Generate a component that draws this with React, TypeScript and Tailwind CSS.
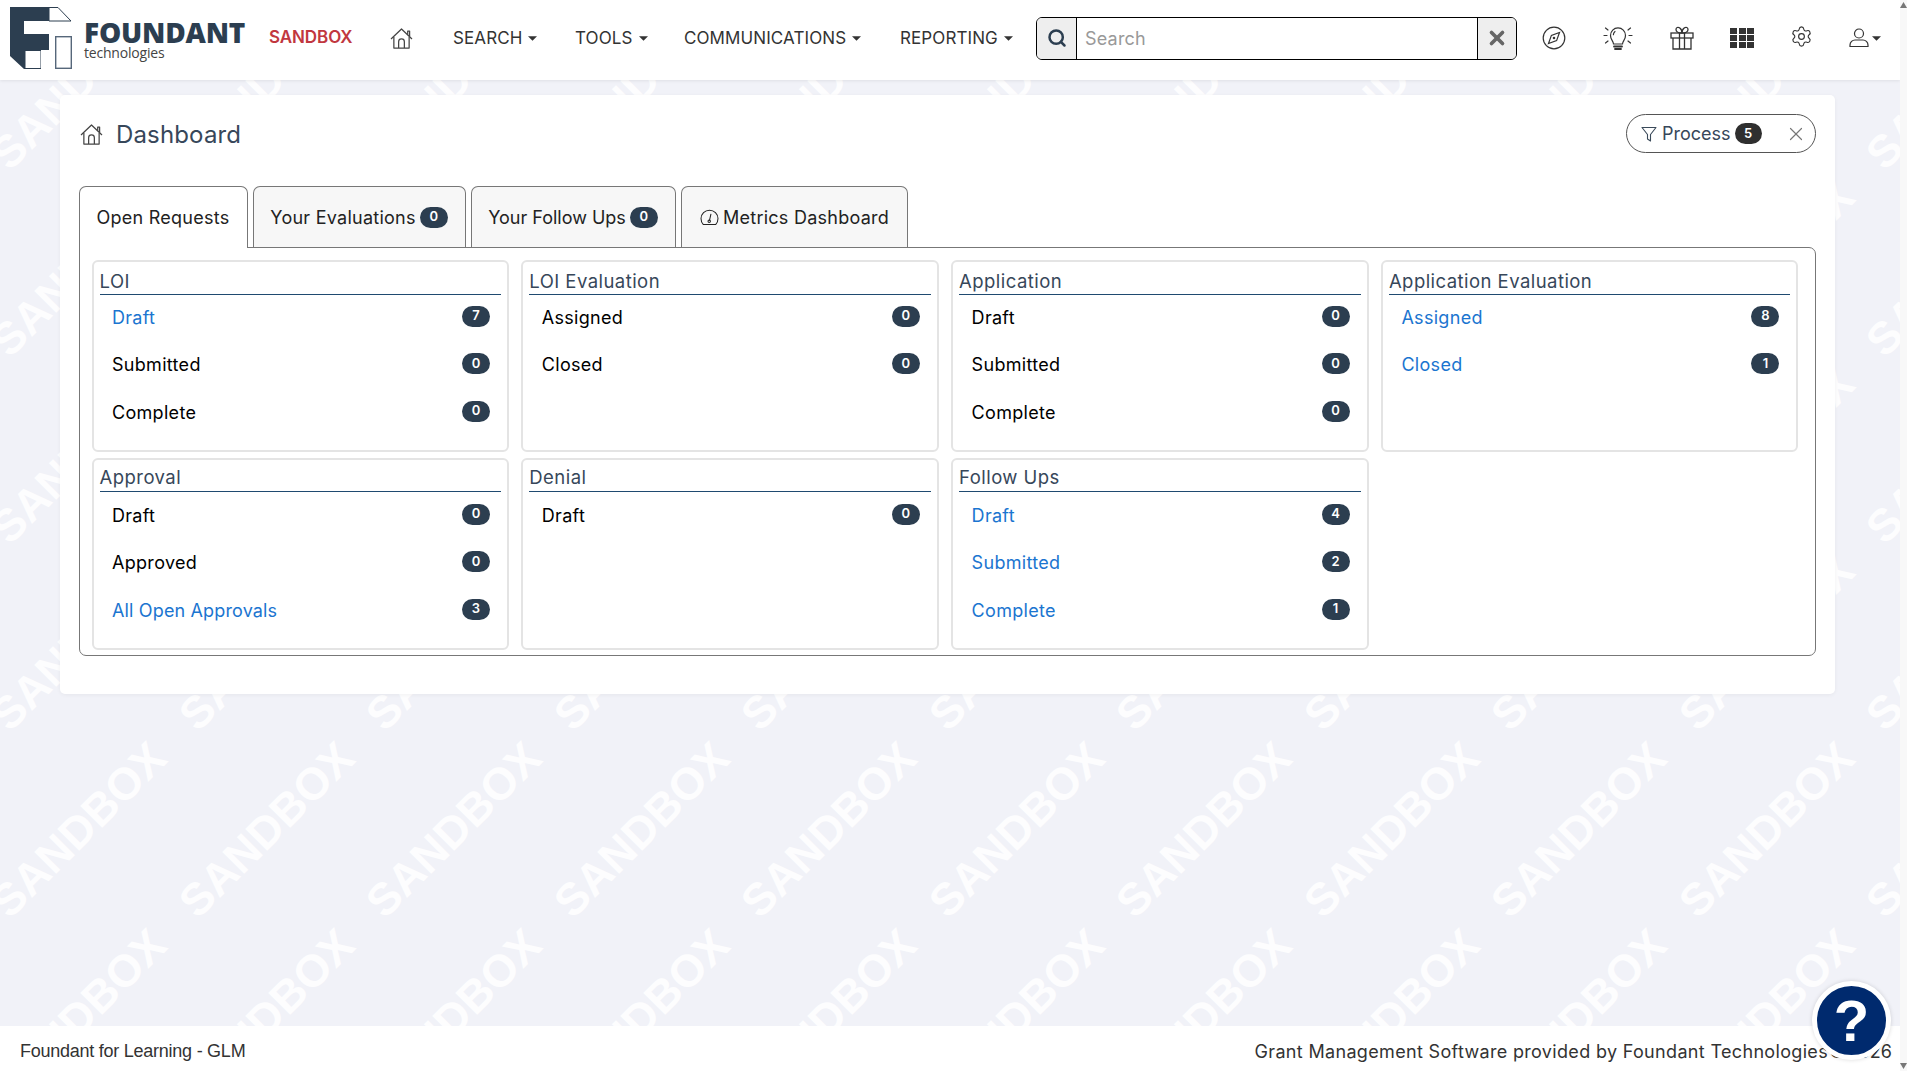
import { Search, X, Settings } from "lucide-react"

const sans = "font-['Inter','Liberation_Sans',sans-serif]"

function Caret({ className = "" }: { className?: string }) {
  return (
    <svg viewBox="0 0 10 5" className={`w-[9px] h-[5px] ${className}`}>
      <path d="M0 0h10L5 5z" fill="#333" />
    </svg>
  )
}

function Logo() {
  return (
    <svg viewBox="0 0 73 72" className="w-[73px] h-[72px] shrink-0 mt-[-4px]">
      <path d="M10 7H49V21H24V34H49V50H41V69H24L10 56Z" fill="#2c3e50" />
      <rect x="25.5" y="51" width="15" height="17" fill="#fff" />
      <path d="M49 7.5H58L71 21H49Z" fill="#fff" stroke="#2c3e50" />
      <rect x="55.7" y="36.7" width="15.6" height="31.6" fill="#fff" stroke="#56677a" strokeWidth="1.4" />
    </svg>
  )
}

function HomeIcon({ className = "" }: { className?: string }) {
  return (
    <svg viewBox="0 0 24 22" fill="none" stroke="#444" strokeWidth="1.3" strokeLinejoin="round" className={className}>
      <path d="M1 11.5 12 1l11 10.5" />
      <path d="M18.5 7V3.2h2V9" />
      <path d="M4 9.5V21h16V9.5" />
      <path d="M9 21v-6.5a3 3 0 0 1 6 0V21" />
    </svg>
  )
}

function CompassIcon() {
  return (
    <svg viewBox="0 0 24 24" fill="none" stroke="#333" strokeWidth="1.2" className="w-[24px] h-[24px]">
      <circle cx="12" cy="12" r="10.8" />
      <path d="M17.5 6.5 14.6 14.6 6.5 17.5 9.4 9.4Z" />
      <circle cx="12" cy="12" r="0.7" fill="#333" />
    </svg>
  )
}

function BulbIcon() {
  return (
    <svg viewBox="0 0 30 26" fill="none" stroke="#333" strokeWidth="1.2" strokeLinecap="round" className="w-[30px] h-[26px]">
      <path d="M10.5 19c0-3-3-4.2-3-8.6a7.5 7.5 0 0 1 15 0c0 4.400-3 5.600-3 8.600Z" />
      <path d="M11 21.500h8M12 24h6" strokeWidth="1.800" />
      <path d="M12 6.500c-1 .8-1.600 2-1.600 3.200" />
      <path d="M1 10.500h3M26 10.500h3M2.500 3l2.500 2M27.500 3 25 5M2.500 18l2.500-2M27.500 18 25 16" />
    </svg>
  )
}

function GiftIcon() {
  return (
    <svg viewBox="0 0 24 24" fill="none" stroke="#333" strokeWidth="1.3" className="w-[24px] h-[24px]">
      <rect x="1" y="7" width="22" height="5" />
      <path d="M3 12v11h18V12" />
      <path d="M9.500 7v16M14.500 7v16" />
      <path d="M12 7C9 7 6 6 6 3.500 6 1.500 8 .8 9.500 1.800 11 2.800 12 5 12 7c0-2 1-4.200 2.500-5.200C16 .8 18 1.500 18 3.500 18 6 15 7 12 7Z" />
    </svg>
  )
}

function AppsIcon() {
  return (
    <div className="grid grid-cols-3 gap-[1.5px] w-[24px] h-[20px]">
      {Array.from({ length: 9 }).map((_, i) => (
        <div key={i} className="bg-[#333]" />
      ))}
    </div>
  )
}

function UserIcon() {
  return (
    <svg viewBox="0 0 20 20" fill="none" stroke="#333" strokeWidth="1.2" className="w-[20px] h-[20px]">
      <circle cx="10" cy="5.500" r="4.500" />
      <path d="M1 18.500v-1.500c0-3 2.500-5 5-5h8c2.500 0 5 2 5 5v1.500Z" />
    </svg>
  )
}

function FunnelIcon() {
  return (
    <svg viewBox="0 0 16 16" fill="none" stroke="#3a4a5a" strokeWidth="1.100" strokeLinejoin="round" className="w-[16px] h-[16px]">
      <path d="M1 1.500h14L9.500 8.500v6.500l-3-2V8.500Z" />
    </svg>
  )
}

function GaugeIcon() {
  return (
    <svg viewBox="0 0 20 18" fill="none" stroke="#222" strokeWidth="1.100" strokeLinecap="round" className="w-[19px] h-[17px]">
      <path d="M3.500 16.500a9 9 0 1 1 13 0Z" />
      <path d="M11.500 5.500 10 12" />
      <circle cx="9.700" cy="13" r="1.300" />
    </svg>
  )
}

function NavItem({ label, className }: { label: string; className: string }) {
  return (
    <div className={`flex items-center gap-[6px] mt-[1px] text-[17px] text-[#333] tracking-[0.1px] ${className}`}>
      <span>{label}</span>
      <Caret />
    </div>
  )
}

function Badge({ n }: { n: number }) {
  return (
    <span className="flex items-center justify-center w-[28px] h-[21px] rounded-full bg-[#2c3e50] text-white text-[13px] font-semibold tracking-normal">
      {n}
    </span>
  )
}

type Row = { label: string; count: number; link?: boolean }

function Panel({ title, rows, tall }: { title: string; rows: Row[]; tall?: boolean }) {
  return (
    <div className="h-[192px] border-2 border-[#e4e4e4] rounded-[6px] px-[6px]">
      <div className={`border-b-[1.5px] border-[#1f4a70] text-[18.5px] leading-[26px] tracking-[0.45px] text-[#37475a] ${tall ? "h-[32px] pt-[4.500px]" : "h-[33px] pt-[6px]"}`}>
        {title}
      </div>
      <div className={`pl-[12.500px] pr-[11px] ${tall ? "pt-[12px]" : "pt-[11px]"}`}>
        {rows.map((r) => (
          <div key={r.label} className="flex items-start justify-between h-[47.500px]">
            <span className={`text-[18px] leading-[24px] ${r.label.length > 12 ? "tracking-[0.15px]" : "tracking-[0.3px]"} ${r.link ? "text-[#1b75d0]" : "text-black"}`}>
              {r.label}
            </span>
            <Badge n={r.count} />
          </div>
        ))}
      </div>
    </div>
  )
}

const marks = Array.from({ length: 66 })

export default function App() {
  return (
    <div className={`relative flex w-[1907px] h-[1071px] overflow-hidden bg-[#f8f8f8] ${sans}`}>
      <div className="relative flex flex-col w-[1900px] h-full overflow-hidden bg-[#f1f2f8]">
        {/* watermark tiles */}
        <div className="absolute left-[-15px] top-[-12px] grid grid-cols-[repeat(11,187.500px)] auto-rows-[187px] font-['Liberation_Sans',sans-serif] font-bold text-[45px] text-[#fdfdfe] select-none">
          {marks.map((_, i) => (
            <div key={i} className="flex items-center justify-center">
              <span className="-rotate-45 whitespace-nowrap">SANDBOX</span>
            </div>
          ))}
        </div>

        <header className="relative flex items-center h-[80px] pb-[4px] shrink-0 bg-white shadow-[0_1px_3px_rgba(0,0,0,0.08)]">
          <Logo />
          <div className="ml-[11px] mt-[1px] w-[170px]">
            <div className="font-['Open_Sans',sans-serif] font-extrabold text-[28px] leading-[28px] tracking-[-0.2px] text-[#2c3e50]">FOUNDANT</div>
            <div className="font-['Open_Sans',sans-serif] text-[14px] leading-[14px] tracking-[-0.2px] text-[#444]">technologies</div>
          </div>
          <span className="ml-[15px] w-[82px] text-[17px] font-semibold tracking-[-0.1px] text-[#c1373f]">SANDBOX</span>
          <HomeIcon className="ml-[39px] w-[23px] h-[21px]" />
          <NavItem label="SEARCH" className="ml-[40px] w-[122px]" />
          <NavItem label="TOOLS" className="w-[109px]" />
          <NavItem label="COMMUNICATIONS" className="w-[216px]" />
          <NavItem label="REPORTING" className="w-[136px]" />

          <div className="flex items-stretch h-[43px] w-[481px] border-[1.5px] border-black rounded-[6px] overflow-hidden">
            <div className="flex items-center justify-center w-[40px] bg-[#eee] border-r-[1.5px] border-black">
              <Search size={20} strokeWidth={3} color="#2c3e50" />
            </div>
            <div className="flex flex-1 items-center pl-[8px] text-[18px] tracking-[0.2px] text-[#999]">Search</div>
            <div className="flex items-center justify-center w-[39px] bg-[#eee] border-l-[1.5px] border-black">
              <X size={22} strokeWidth={4} color="#666" />
            </div>
          </div>

          <div className="flex items-center justify-center w-[24px] ml-[25px]"><CompassIcon /></div>
          <div className="flex items-center justify-center w-[30px] ml-[37px]"><BulbIcon /></div>
          <div className="flex items-center justify-center w-[24px] ml-[37px]"><GiftIcon /></div>
          <div className="flex items-center justify-center w-[24px] ml-[36px]"><AppsIcon /></div>
          <div className="flex items-center justify-center w-[24px] ml-[35px] mt-[-3px]">
            <Settings size={23} strokeWidth={1.200} color="#333" />
          </div>
          <div className="flex items-center gap-[3px] ml-[36px]">
            <UserIcon />
            <Caret />
          </div>
        </header>

        <main className="relative w-[1775px] h-[599px] ml-[60px] mt-[15px] bg-white rounded-[5px] shadow-[0_1px_4px_rgba(0,0,0,0.05)] pl-[18.500px] pr-[19px]">
          <div className="flex items-start justify-between h-[91px] pt-[19px]">
            <div className="flex items-center h-[40px] ml-[1.500px]">
              <HomeIcon className="w-[23px] h-[21px]" />
              <span className="ml-[13px] mt-[2px] text-[24px] text-[#37475a] tracking-[0.15px]">Dashboard</span>
            </div>
            <div className="flex items-center w-[190px] h-[39px] border border-[#555] rounded-full pl-[14px]">
              <FunnelIcon />
              <span className="ml-[5px] text-[18px] text-[#37475a]">Process</span>
              <span className="flex items-center justify-center ml-[4px] w-[27px] h-[21px] rounded-full bg-[#2f2f2f] text-white text-[13px] font-semibold">5</span>
              <X size={22} strokeWidth={1.300} color="#777" className="ml-[23px]" />
            </div>
          </div>

          <div className="relative z-10 flex items-stretch h-[61px] gap-[5px] text-[18px] tracking-[0.25px] text-[#222]">
            <div className="flex items-center justify-center w-[169px] h-[62px] bg-white border border-b-0 border-[#777] rounded-t-[7px]">
              Open Requests
            </div>
            <div className="flex items-center justify-center gap-[4px] w-[213px] bg-[#f7f7f7] border border-b-0 border-[#777] rounded-t-[7px]">
              Your Evaluations <Badge n={0} />
            </div>
            <div className="flex items-center justify-center gap-[4px] w-[205px] bg-[#f7f7f7] border border-b-0 border-[#777] rounded-t-[7px] tracking-normal">
              Your Follow Ups <Badge n={0} />
            </div>
            <div className="flex items-center justify-center gap-[4px] w-[227px] pl-[1px] bg-[#f7f7f7] border border-b-0 border-[#777] rounded-t-[7px]">
              <GaugeIcon /> Metrics Dashboard
            </div>
          </div>

          <div className="h-[409px] border border-[#777] rounded-b-[7px] rounded-tr-[7px] pl-[12px] pt-[11.500px]">
            <div className="grid grid-cols-[repeat(4,417.500px)] gap-x-[12.300px] gap-y-[6px]">
              <Panel title="LOI" rows={[{ label: "Draft", count: 7, link: true }, { label: "Submitted", count: 0 }, { label: "Complete", count: 0 }]} />
              <Panel title="LOI Evaluation" rows={[{ label: "Assigned", count: 0 }, { label: "Closed", count: 0 }]} />
              <Panel title="Application" rows={[{ label: "Draft", count: 0 }, { label: "Submitted", count: 0 }, { label: "Complete", count: 0 }]} />
              <Panel title="Application Evaluation" rows={[{ label: "Assigned", count: 8, link: true }, { label: "Closed", count: 1, link: true }]} />
              <Panel tall title="Approval" rows={[{ label: "Draft", count: 0 }, { label: "Approved", count: 0 }, { label: "All Open Approvals", count: 3, link: true }]} />
              <Panel tall title="Denial" rows={[{ label: "Draft", count: 0 }]} />
              <Panel tall title="Follow Ups" rows={[{ label: "Draft", count: 4, link: true }, { label: "Submitted", count: 2, link: true }, { label: "Complete", count: 1, link: true }]} />
            </div>
          </div>
        </main>

        <footer className="relative flex items-center justify-between mt-auto h-[45px] pt-[5px] shrink-0 bg-white pl-[20px] pr-[8px]">
          <span className="font-['Liberation_Sans',sans-serif] text-[18px] tracking-[-0.25px] text-[#333]">Foundant for Learning - GLM</span>
          <div className="flex items-center text-[18px] text-[#333]">
            <span className="tracking-[0.33px]">Grant Management Software provided by Foundant Technologies</span>
            <span className="flex justify-end gap-[2px] w-[64px] whitespace-nowrap"><span>©</span><span>2026</span></span>
          </div>
        </footer>

        {/* help bubble */}
        <div className="absolute left-[1812px] top-[981px] flex items-center justify-center w-[79px] h-[79px] rounded-full bg-[#002a6e] border-[5px] border-white shadow-[0_0_4px_rgba(0,0,0,0.15)] font-['Liberation_Sans',sans-serif] font-bold text-[58px] leading-none text-white">
          ?
        </div>
      </div>

      {/* page scrollbar */}
      <div className="flex flex-col justify-between items-center w-[7px] h-full py-[2px]">
        <svg viewBox="0 0 7 6" className="w-[7px] h-[6px]"><path d="M3.500 0 7 6H0z" fill="#777" /></svg>
        <svg viewBox="0 0 7 6" className="w-[7px] h-[6px]"><path d="M0 0h7L3.500 6z" fill="#777" /></svg>
      </div>
    </div>
  )
}
